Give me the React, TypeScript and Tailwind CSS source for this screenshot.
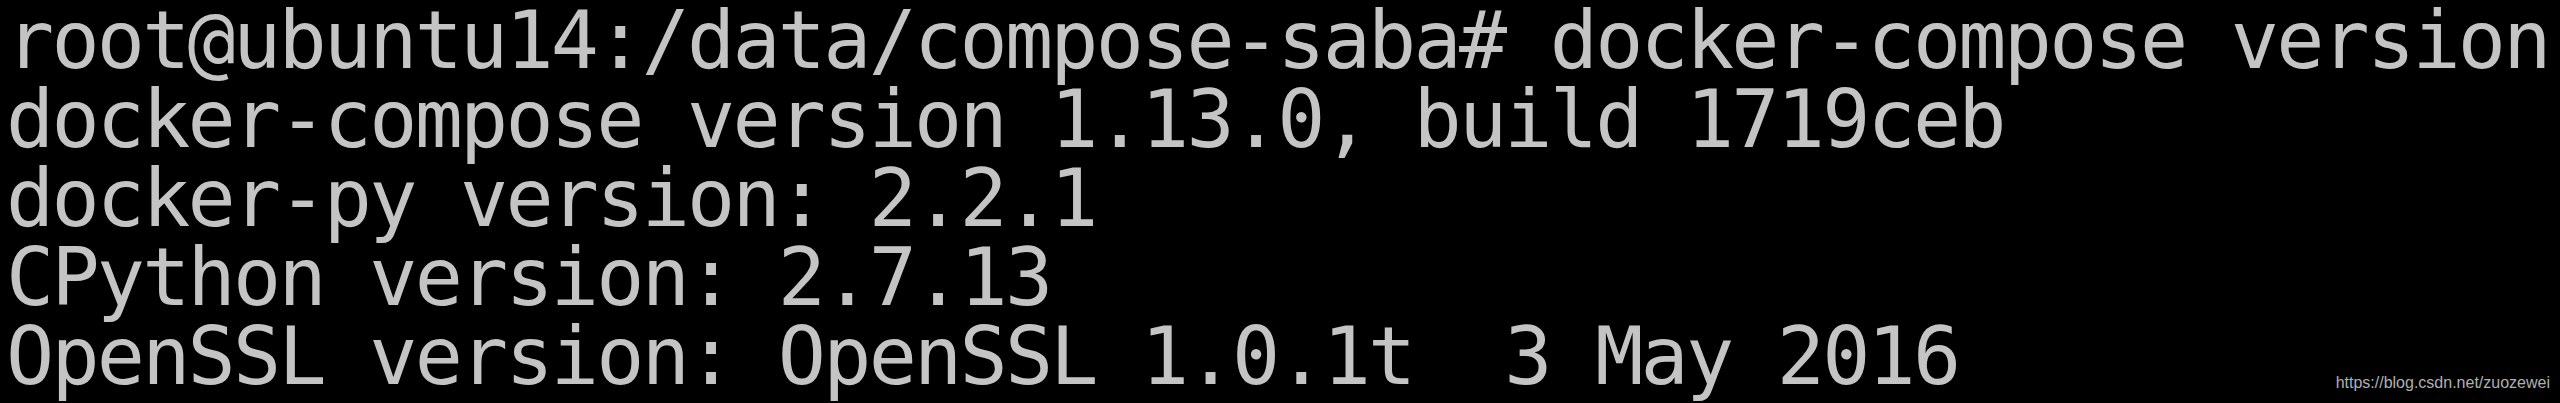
const lines = [
  "root@ubuntu14:/data/compose-saba# docker-compose version",
  "docker-compose version 1.13.0, build 1719ceb",
  "docker-py version: 2.2.1",
  "CPython version: 2.7.13",
  "OpenSSL version: OpenSSL 1.0.1t  3 May 2016",
];

const App = () => {
  return (
    <div className="relative w-full h-[403px] overflow-hidden bg-black">
      <pre className="pt-px pl-[6px] m-0 font-['DejaVu_Sans_Mono',monospace] text-[80px] leading-[79px] tracking-[-2.76px] text-[#c4c4c4] whitespace-pre">
        {lines.map((line) => (
          <div key={line}>{line}</div>
        ))}
      </pre>
      {/* csdn watermark */}
      <span className="absolute right-[10px] bottom-[12px] font-['Liberation_Sans',Arial,sans-serif] text-[16px] leading-none text-[#b0b0b0]">
        https://blog.csdn.net/zuozewei
      </span>
    </div>
  );
};

export default App;
